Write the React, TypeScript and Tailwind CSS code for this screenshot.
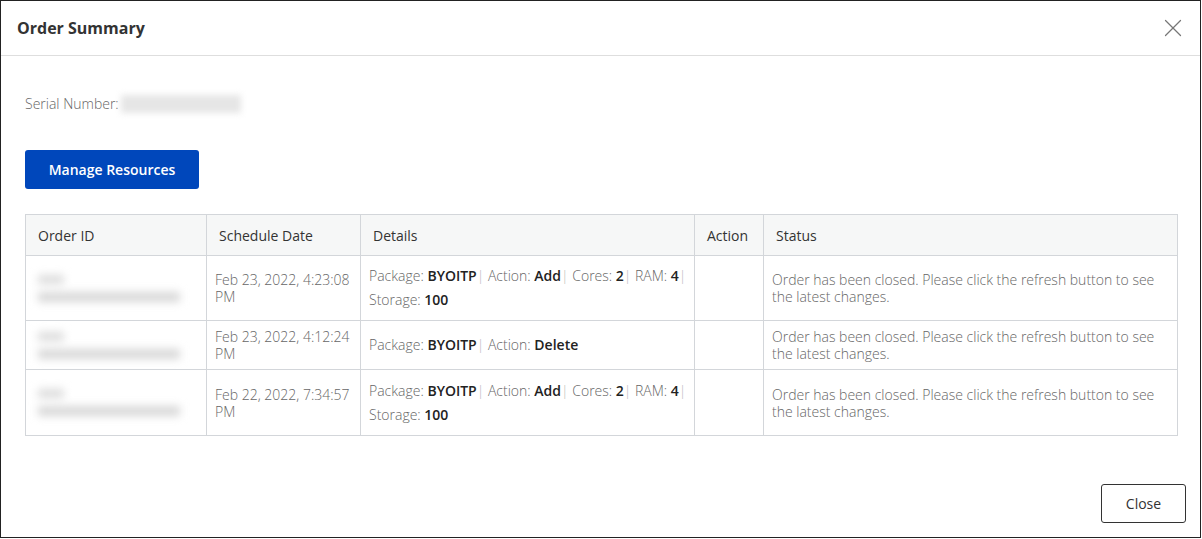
import { X } from "lucide-react";

type Order = {
  id: string;
  date: string;
  details: [string, string][];
};

const orders: Order[] = [
  {
    id: "xxxxxxxxxxxxxxxxxxxxxxxxxxx",
    date: "Feb 23, 2022, 4:23:08 PM",
    details: [
      ["Package", "BYOITP"],
      ["Action", "Add"],
      ["Cores", "2"],
      ["RAM", "4"],
      ["Storage", "100"],
    ],
  },
  {
    id: "xxxxxxxxxxxxxxxxxxxxxxxxxxx",
    date: "Feb 23, 2022, 4:12:24 PM",
    details: [
      ["Package", "BYOITP"],
      ["Action", "Delete"],
    ],
  },
  {
    id: "xxxxxxxxxxxxxxxxxxxxxxxxxxx",
    date: "Feb 22, 2022, 7:34:57 PM",
    details: [
      ["Package", "BYOITP"],
      ["Action", "Add"],
      ["Cores", "2"],
      ["RAM", "4"],
      ["Storage", "100"],
    ],
  },
];

const rowHeights = ["h-[65px]", "h-[49px]", "h-[66px]"];

// order ids are blurred out in the source screenshot
function Redacted() {
  return (
    <div className="flex flex-col gap-[8px] pl-[4px] blur-[4px]">
      <span className="h-[9px] w-[26px] bg-[#dcdcdc]" />
      <span className="h-[10px] w-[142px] bg-[#d8d8d8]" />
    </div>
  );
}

function DetailsText({ items }: { items: [string, string][] }) {
  return (
    <p className="text-[14px] leading-[24px] font-light text-[#666]">
      {items.map(([label, value], i) => (
        <span key={label}>
          <span className="whitespace-nowrap">
            {label}: <span className="font-semibold text-[#222]">{value}</span>
            {i < items.length - 1 ? <span className="text-[#bbb]">|</span> : null}
          </span>{" "}
        </span>
      ))}
    </p>
  );
}

export default function App() {
  return (
    <div className="h-[538px] w-[1201px] border border-[#222] bg-white font-['Open_Sans',sans-serif] text-[#333]">
      <div className="flex h-[55px] items-center justify-between border-b border-[#dedede] pl-[16px] pr-[12px]">
        <h2 className="text-[16px] font-bold text-[#333]">Order Summary</h2>
        <X className="h-[30px] w-[30px] text-[#777]" strokeWidth={1} />
      </div>

      <div className="flex flex-col px-[24px]">
        <div className="mt-[39px] flex items-center text-[14px] leading-[18px] font-light text-[#666]">
          <span>Serial Number:</span>
          <span className="ml-[2px] h-[18px] w-[120px] bg-[#e6e6e6] blur-[3px]" />
        </div>

        <button className="mt-[37px] h-[39px] w-[174px] rounded-[3px] bg-[#0047bb] text-[14px] font-semibold text-white">
          Manage Resources
        </button>

        <table className="mt-[25px] w-[1152px] table-fixed border-collapse border border-[#d3d6da] text-left">
          <colgroup>
            <col className="w-[181px]" />
            <col className="w-[154px]" />
            <col className="w-[334px]" />
            <col className="w-[69px]" />
            <col className="w-[414px]" />
          </colgroup>
          <thead>
            <tr className="h-[41px] bg-[#f6f7f7]">
              {["Order ID", "Schedule Date", "Details", "Action", "Status"].map((h) => (
                <th key={h} className="border border-[#d3d6da] px-[12px] text-[14px] font-normal text-[#333]">
                  {h}
                </th>
              ))}
            </tr>
          </thead>
          <tbody>
            {orders.map((o, i) => (
              <tr key={o.date} className={rowHeights[i]}>
                <td className="border border-[#d3d6da] px-[8px] align-middle">
                  <Redacted />
                </td>
                <td className="border border-[#d3d6da] px-[8px] align-middle text-[14px] leading-[17px] font-light text-[#666]">
                  {o.date}
                </td>
                <td className="border border-[#d3d6da] pl-[8px] pr-[2px] align-middle">
                  <DetailsText items={o.details} />
                </td>
                <td className="border border-[#d3d6da]" />
                <td className="border border-[#d3d6da] px-[8px] align-middle text-[14px] leading-[17px] font-light text-[#666]">
                  Order has been closed. Please click the refresh button to see the latest changes.
                </td>
              </tr>
            ))}
          </tbody>
        </table>

        <div className="mt-[48px] flex justify-end">
          <button className="mr-[-10px] h-[39px] w-[85px] rounded-[3px] border border-[#333] text-[14px] text-[#333]">
            Close
          </button>
        </div>
      </div>
    </div>
  );
}
